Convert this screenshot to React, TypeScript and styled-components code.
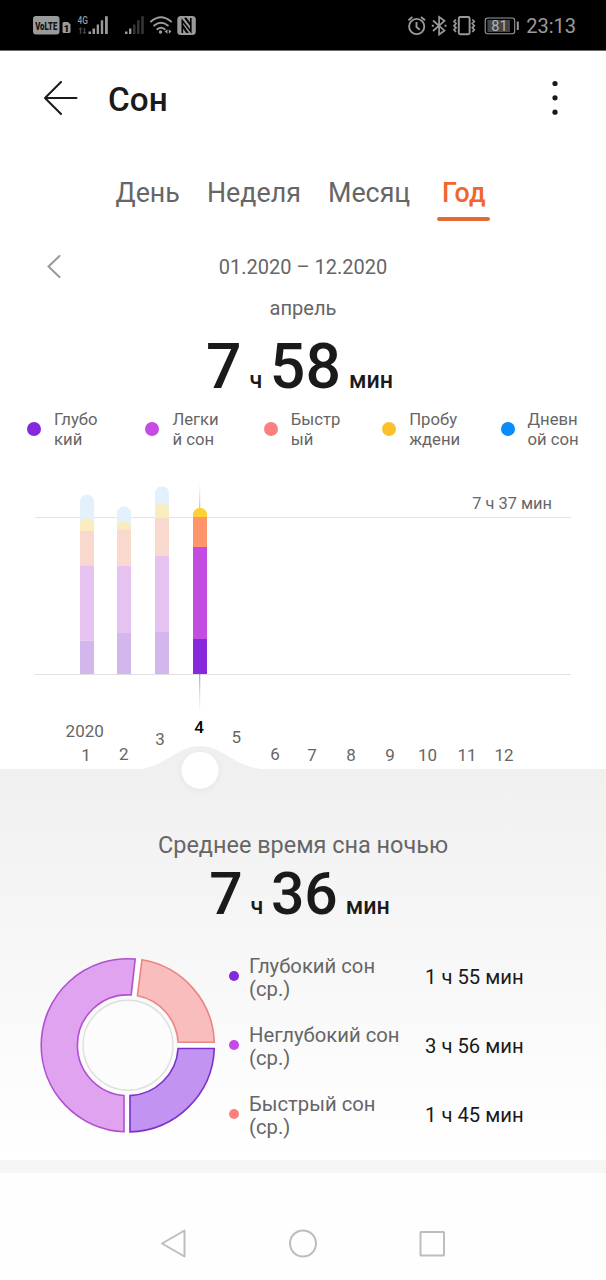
import React from 'react';
import styled, { createGlobalStyle } from 'styled-components';

const Global = createGlobalStyle`
  *, *::before, *::after { box-sizing: border-box; }
  body { margin: 0; background: #fff; font-family: Roboto, "Noto Sans", sans-serif; color: #1a1a1a; }
  svg { display: block; flex: none; }
`;

const Screen = styled.div`
  width: 606px;
  height: 1280px;
  overflow: hidden;
  display: flex;
  flex-direction: column;
  background: #fff;
`;

const StatusBar = styled.header`
  flex: none;
  height: 51px;
  padding: 0 30px 0 33px;
  background: #000;
  border-bottom: 1px solid #6b6b6b;
  display: flex;
  justify-content: space-between;
  align-items: center;
  color: #9a9a9a;
`;

const StatusRight = styled.div`
  display: flex;
  align-items: center;
`;

const Clock = styled.span`
  margin-left: 7px;
  font-size: 20px;
  line-height: 24px;
  padding-top: 1px;
`;

const TitleBar = styled.div`
  flex: none;
  height: 96px;
  padding: 0 47px 0 43px;
  display: flex;
  align-items: center;
`;

const Title = styled.h1`
  flex: 1;
  margin: 2px 0 0 29px;
  font-size: 33.3px;
  line-height: 40px;
  font-weight: 500;
`;

const Tabs = styled.nav`
  flex: none;
  height: 100px;
  padding: 26px 0 0 115.5px;
  display: flex;
  align-items: flex-start;
  gap: 27px;
`;

const Tab = styled.div<{ $active?: boolean; $width: number }>`
  width: ${(p) => p.$width}px;
  font-size: 26.8px;
  line-height: 40px;
  white-space: nowrap;
  color: ${(p) => (p.$active ? '#f1672a' : '#666')};
  font-weight: ${(p) => (p.$active ? 500 : 400)};
  &::after {
    content: '';
    display: ${(p) => (p.$active ? 'block' : 'none')};
    height: 4px;
    margin: 4px -5px 0;
    border-radius: 2px;
    background: #e36a38;
  }
`;

const DateRow = styled.div`
  flex: none;
  height: 40px;
  padding: 0 47px;
  display: grid;
  grid-template-columns: 14px 1fr 14px;
  align-items: center;
  color: #666;
  font-size: 20px;
  text-align: center;
`;

const Month = styled.div`
  flex: none;
  height: 41px;
  line-height: 42px;
  text-align: center;
  font-size: 20.1px;
  color: #666;
`;

const Duration = styled.div<{ $size: number; $height: number }>`
  flex: none;
  height: ${(p) => p.$height}px;
  display: flex;
  justify-content: center;
  align-items: baseline;
  font-weight: 500;
  font-size: ${(p) => p.$size}px;
  line-height: ${(p) => p.$height}px;
  padding-right: 7px;
`;

const Unit = styled.span<{ $gap: number }>`
  font-size: 23.3px;
  margin: 0 ${(p) => p.$gap}px 0 8px;
`;

const Legend = styled.div`
  flex: none;
  height: 55px;
  padding: 5px 0 0 27px;
  display: grid;
  grid-template-columns: repeat(5, 118.4px);
`;

const LegendItem = styled.div`
  display: flex;
  align-items: center;
  height: 40px;
  gap: 13px;
  font-size: 16.7px;
  line-height: 20px;
  color: #666;
  white-space: pre;
  i { margin-bottom: 3px; }
`;

const Dot = styled.i<{ $color: string; $size: number }>`
  flex: none;
  width: ${(p) => p.$size}px;
  height: ${(p) => p.$size}px;
  border-radius: 50%;
  background: ${(p) => p.$color};
`;

const ChartArea = styled.div`
  flex: none;
  height: 309px;
  position: relative;
  z-index: 1;
  svg { overflow: visible; }
  text { font-size: 17px; fill: #666; }
  text.average { font-size: 16.4px; }
  text.current { fill: #000; }
`;

const Summary = styled.section`
  flex: none;
  height: 391px;
  background: linear-gradient(#f0f0f0, #fff);
  display: flex;
  flex-direction: column;
`;

const SummaryTitle = styled.div`
  margin-top: 61px;
  height: 30px;
  line-height: 31px;
  text-align: center;
  font-size: 23.45px;
  color: #666;
`;

const Breakdown = styled.div`
  display: flex;
  align-items: flex-start;
  padding-left: 36px;
`;

const RingBox = styled.div`
  padding-top: 27px;
`;

const Rows = styled.div`
  display: flex;
  flex-direction: column;
  padding: 16px 0 0 9px;
`;

const Row = styled.div`
  height: 69px;
  display: grid;
  grid-template-columns: 10px 160px 1fr;
  column-gap: 10px;
  align-items: center;
  font-size: 20.25px;
  i { margin-bottom: 4px; }
`;

const RowName = styled.div`
  line-height: 23px;
  color: #666;
  white-space: pre;
`;

const RowValue = styled.div`
  padding-left: 6px;
  line-height: 23px;
  white-space: nowrap;
`;

const Divider = styled.div`
  flex: none;
  height: 13px;
  background: #f6f6f6;
`;

const SystemNav = styled.footer`
  flex: 1;
  padding: 32px 0 0 160px;
  background: #fefefe;
  display: flex;
  align-items: center;
  gap: 101px;
`;

const legend = [
  { color: '#8428dc', text: 'Глубо\nкий' },
  { color: '#c44be4', text: 'Легки\nй сон' },
  { color: '#fb8180', text: 'Быстр\nый' },
  { color: '#fbc02a', text: 'Пробу\nждени' },
  { color: '#0a8cfb', text: 'Дневн\nой сон' },
];

const rows = [
  { color: '#8428dc', name: 'Глубокий сон\n(ср.)', value: '1 ч 55 мин' },
  { color: '#c44be4', name: 'Неглубокий сон\n(ср.)', value: '3 ч 56 мин' },
  { color: '#fb8180', name: 'Быстрый сон\n(ср.)', value: '1 ч 45 мин' },
];

const pale = ['#e2f1fc', '#f9ecbe', '#f9d9cd', '#e6c2f1', '#d3b7ec'];
const vivid = ['#ffd137', '#ffd137', '#ff966b', '#c34ce1', '#8829db'];

/* Segment edges from the top of each bar down to the baseline. */
const bars = [
  { x: 80, edges: [494.5, 518, 531, 565.3, 640.5, 674], colors: pale },
  { x: 117, edges: [506.3, 521, 529.3, 566, 633, 674], colors: pale },
  { x: 155, edges: [486.3, 503, 518, 556, 632, 674], colors: pale },
  { x: 193, edges: [508, 508, 517, 547, 639, 674], colors: vivid },
];

const months: [string, number, number][] = [
  ['2020', 84.7, 736.5], ['1', 86, 761], ['2', 123.7, 760], ['3', 160, 745],
  ['5', 236.2, 743], ['6', 275, 760], ['7', 312, 761], ['8', 351, 761],
  ['9', 390, 761], ['10', 427.5, 761], ['11', 467, 761], ['12', 504, 761],
];

const capPath = (x: number, top: number, bottom: number) =>
  `M${x} ${bottom}V${top + 7}a7 7 0 0 1 14 0V${bottom}z`;

function YearChart() {
  return (
    <ChartArea>
      <svg width="606" height="309" viewBox="0 460 606 309">
        <defs>
          <linearGradient id="up" x1="0" y1="0" x2="0" y2="1">
            <stop offset="0" stopColor="#d6cfe8" stopOpacity="0" />
            <stop offset="1" stopColor="#c4bcd8" />
          </linearGradient>
          <linearGradient id="down" x1="0" y1="0" x2="0" y2="1">
            <stop offset="0" stopColor="#b3a2dd" />
            <stop offset="1" stopColor="#cbbfec" stopOpacity="0" />
          </linearGradient>
          <filter id="soft" x="-50%" y="-50%" width="200%" height="200%">
            <feDropShadow dx="0" dy="1.5" stdDeviation="3" floodColor="#000" floodOpacity="0.05" />
          </filter>
        </defs>
        <rect x="35" y="517" width="536" height="1" fill="#e4e4e4" />
        <rect x="35" y="674" width="536" height="1" fill="#e0e0e0" />
        <rect x="199" y="483" width="1.3" height="26" fill="url(#up)" />
        <rect x="199" y="674" width="1.3" height="39" fill="url(#down)" />
        {bars.map(({ x, edges, colors }) => (
          <g key={x}>
            <path d={capPath(x, edges[0], edges[2])} fill={colors[0]} />
            <path d={capPath(x, edges[1], Math.max(edges[2], edges[1] + 7))} fill={colors[1]} />
            {[2, 3, 4].map((i) => (
              <rect key={i} x={x} y={edges[i]} width="14" height={edges[i + 1] - edges[i]} fill={colors[i]} />
            ))}
          </g>
        ))}
        <text x="552" y="509" textAnchor="end" className="average">7 ч 37 мин</text>
        {months.map(([label, x, y]) => (
          <text key={label} x={x} y={y} textAnchor="middle">{label}</text>
        ))}
        <text x="199" y="733" textAnchor="middle" fontWeight="500" className="current">4</text>
        <path d="M134 769.5C166 768 176 746 200 746S234 768 266 769.5z" fill="#f0f0f0" />
        <circle cx="200" cy="770.3" r="18.4" fill="#fff" filter="url(#soft)" />
      </svg>
    </ChartArea>
  );
}

function Ring() {
  return (
    <svg width="184" height="184" viewBox="36 954 184 184">
      <circle cx="127.8" cy="1045.3" r="68.5" fill="none" stroke="#fff" strokeWidth="38" />
      <g strokeWidth="1.6" strokeLinejoin="miter">
        <path d="M124 1131.8A86.6 86.6 0 0 1 41.2 1045.3A86.6 86.6 0 0 1 135.2 959L131.2 995A50.4 50.4 0 0 0 77.4 1045.3A50.4 50.4 0 0 0 124 1095.5z" fill="#e0a3f0" stroke="#b14fcf" />
        <path d="M142 959.8A86.6 86.6 0 0 1 214.3 1042.2H178.1A50.4 50.4 0 0 0 137.4 995.8z" fill="#fabdbd" stroke="#ea8584" />
        <path d="M214.3 1048.5A86.6 86.6 0 0 1 130 1131.9V1095.6A50.4 50.4 0 0 0 178.1 1048.5z" fill="#c293f0" stroke="#7b30cd" />
      </g>
      <circle cx="128" cy="1045.3" r="45" fill="#fcfcfc" stroke="#dde0de" strokeWidth="1.4" />
    </svg>
  );
}

const StatusLeftIcons = () => (
  <svg width="166" height="24" viewBox="33 13 166 24" fill="#9a9a9a">
    <rect x="33" y="16" width="26.5" height="18.5" rx="3" />
    <text transform="translate(46.2 30) scale(.68 1)" fontSize="11.5" fontWeight="900" fill="#111" textAnchor="middle">VoLTE</text>
    <path d="M62.5 23.5q0-1.5 1.5-1.5h4l2.5 2.5v7q0 1.5-1.5 1.5h-5q-1.5 0-1.5-1.5z" />
    <text x="66.6" y="31.5" fontSize="9.5" fontWeight="900" fill="#000" textAnchor="middle">1</text>
    <text transform="translate(77.6 23.8) scale(.8 1)" fontSize="10.5" fontWeight="500">4G</text>
    <path d="M80.5 27l2 2.2h-1.3V34h-1.4v-4.8h-1.3zM84.5 34.2l-2-2.2h1.2v-4h1.5v4h1.3z" fill="#444" />
    <path d="M88.5 31.5h2.5V34h-2.5zM92.5 28.5H95V34h-2.5zM96.7 24.5H99V34h-2.3zM100.8 20.3h2.4V34h-2.4zM105 16.3h2.8V34H105z" />
    <path d="M125 31.5h2.5V34H125zM129 28.5h2.4V34H129z" />
    <path d="M133 24.5h2.5V34H133zM137 20.3h2.5V34H137zM141.2 16.3h2.6V34h-2.6z" fill="#353535" />
    <g fill="none" stroke="#9a9a9a" strokeWidth="2" strokeLinecap="round">
      <path d="M151 21.5q10-8.5 20 0M154.2 25.5q6.8-5.5 13.6 0M157.3 29.2q3.7-3 7.4 0" />
    </g>
    <circle cx="160.5" cy="32" r="1.7" />
    <path d="M167.5 29.3v4.5l-3-2.2zM168.8 29.3v4.5l2.7-2.2z" />
    <rect x="177.3" y="16" width="18.5" height="19" rx="3.5" />
    <path d="M182.3 33V20.5l8.5 11V18" fill="none" stroke="#000" strokeWidth="1.6" />
    <path d="M184 17.8h2.5l4.3 5.7v3.5zM182.3 23.5l6.5 9.5h-2.5l-4-5.5z" fill="#000" />
  </svg>
);

const StatusRightIcons = () => (
  <svg width="112" height="24" viewBox="408 13 112 24" fill="none" stroke="#9a9a9a" strokeWidth="1.9">
    <circle cx="417.7" cy="26.5" r="7.6" />
    <path d="M417.5 22v5l3.2 2.7M409.4 20.2l4-3.2M426 20.2l-4-3.2" />
    <path d="M434 20.5l11.5 10.2-5.4 3.8V17l5.4 3.8L434 31" strokeWidth="1.7" />
    <path d="M432.8 25.7h2M445.5 25.7h2" />
    <rect x="459.8" y="17" width="10.8" height="17.2" rx="1.5" />
    <path d="M457 19.5l-2 2 2 2-2 2.2 2 2.1-2 2 2 2.2M473.3 19.5l2 2-2 2 2 2.2-2 2.1 2 2-2 2.2" strokeWidth="1.7" />
    <rect x="486.2" y="18" width="29.5" height="15.8" rx="2.5" strokeWidth="1.1" />
    <rect x="488.5" y="20" width="22.5" height="12" fill="#454545" stroke="none" />
    <path d="M518.8 21.5v8.5" strokeWidth="2" />
    <text x="500.5" y="31.2" fontSize="14.5" fill="#b5b5b5" stroke="none" textAnchor="middle">81</text>
  </svg>
);

export default function App() {
  return (
    <Screen>
      <Global />
      <StatusBar>
        <StatusLeftIcons />
        <StatusRight>
          <StatusRightIcons />
          <Clock>23:13</Clock>
        </StatusRight>
      </StatusBar>
      <TitleBar>
        <svg width="36" height="36" viewBox="0 0 36 36" fill="none" stroke="#1a1a1a" strokeWidth="2" strokeLinecap="round" strokeLinejoin="round">
          <path d="M33.5 17H2M18 1L2 17l16 16" />
        </svg>
        <Title>Сон</Title>
        <svg width="8" height="40" viewBox="0 0 8 40" fill="#1a1a1a">
          <circle cx="4" cy="4.5" r="2.6" />
          <circle cx="4" cy="18.8" r="2.6" />
          <circle cx="4" cy="33.2" r="2.6" />
        </svg>
      </TitleBar>
      <Tabs>
        <Tab $width={64.5}>День</Tab>
        <Tab $width={94}>Неделя</Tab>
        <Tab $width={87}>Месяц</Tab>
        <Tab $width={43} $active>Год</Tab>
      </Tabs>
      <DateRow>
        <svg width="14" height="24" viewBox="0 0 14 24" fill="none" stroke="#999" strokeWidth="2" strokeLinecap="round">
          <path d="M12.5 1L1.5 11.5l11 10.5" />
        </svg>
        <span>01.2020 – 12.2020</span>
      </DateRow>
      <Month>апрель</Month>
      <Duration $size={62.6} $height={77}>
        7<Unit $gap={7.5}>ч</Unit>58<Unit $gap={0}>мин</Unit>
      </Duration>
      <Legend>
        {legend.map((item) => (
          <LegendItem key={item.text}>
            <Dot $color={item.color} $size={14} />
            {item.text}
          </LegendItem>
        ))}
      </Legend>
      <YearChart />
      <Summary>
        <SummaryTitle>Среднее время сна ночью</SummaryTitle>
        <Duration $size={58.8} $height={67}>
          7<Unit $gap={7.5}>ч</Unit>36<Unit $gap={0}>мин</Unit>
        </Duration>
        <Breakdown>
          <RingBox>
            <Ring />
          </RingBox>
          <Rows>
            {rows.map((row) => (
              <Row key={row.name}>
                <Dot $color={row.color} $size={10} />
                <RowName>{row.name}</RowName>
                <RowValue>{row.value}</RowValue>
              </Row>
            ))}
          </Rows>
        </Breakdown>
      </Summary>
      <Divider />
      <SystemNav>
        <svg width="26" height="30" viewBox="0 0 26 30" fill="none" stroke="#bdbdbd" strokeWidth="2" strokeLinejoin="round">
          <path d="M2 15.5L24.5 2.5v26z" />
        </svg>
        <svg width="30" height="30" viewBox="0 0 30 30" fill="none" stroke="#bdbdbd" strokeWidth="2">
          <circle cx="16" cy="15.5" r="13" />
        </svg>
        <svg width="28" height="30" viewBox="0 0 28 30" fill="none" stroke="#bdbdbd" strokeWidth="2" strokeLinejoin="round">
          <rect x="2.5" y="4" width="23.5" height="23.5" rx="0.5" />
        </svg>
      </SystemNav>
    </Screen>
  );
}
